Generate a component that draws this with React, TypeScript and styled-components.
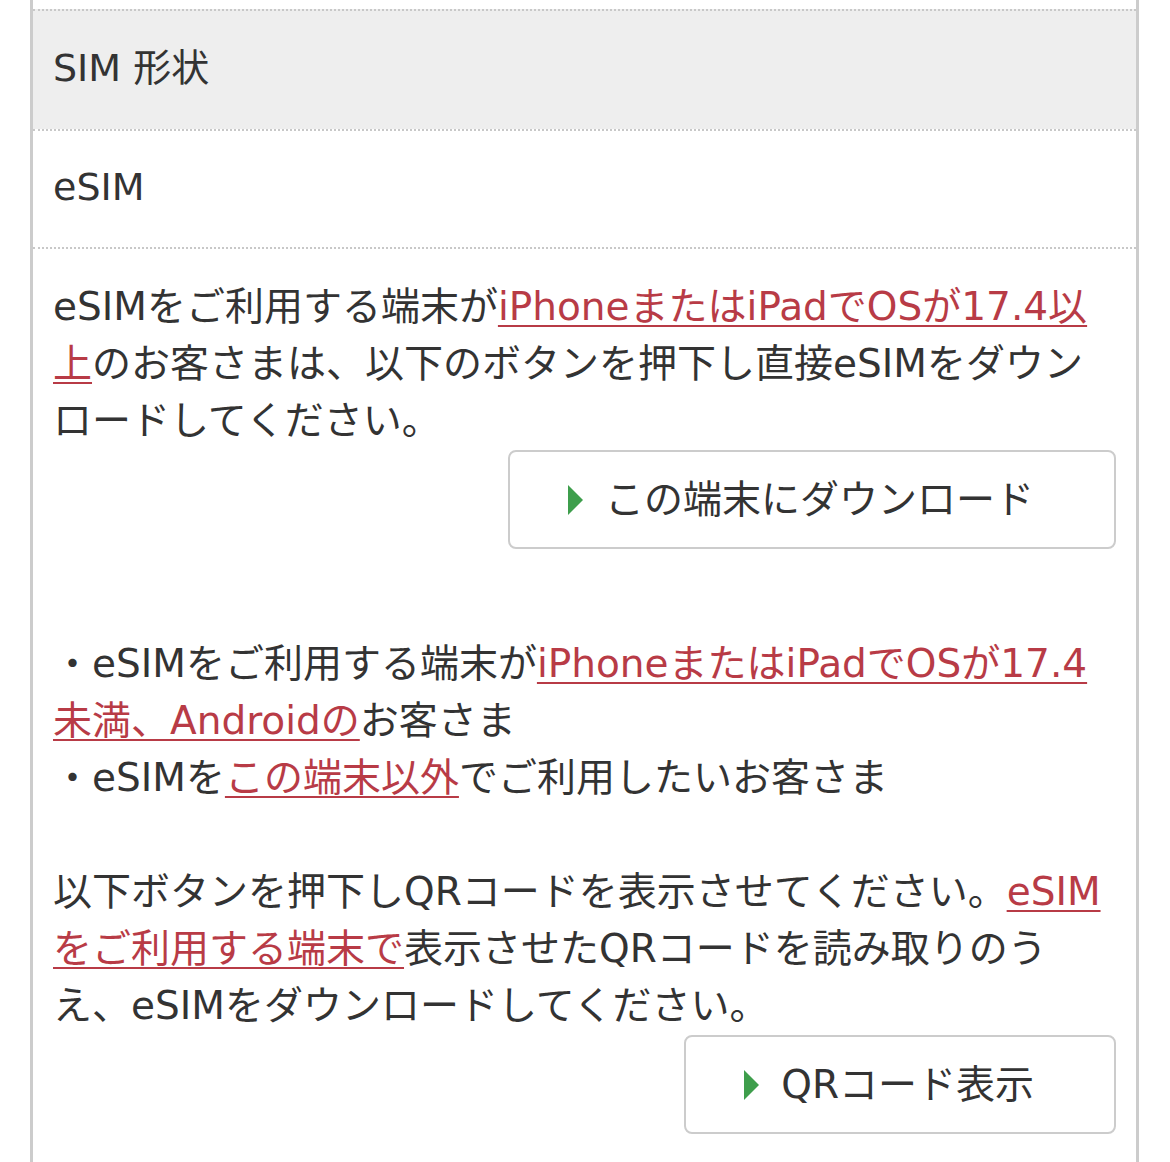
import styled, { createGlobalStyle } from "styled-components";

const GlobalStyle = createGlobalStyle`
  body {
    margin: 0;
    background: #fff;
    font-family: "DejaVu Sans", "Noto Sans CJK JP", sans-serif;
    color: #333;
  }
`;

const Frame = styled.div`
  box-sizing: border-box;
  margin-left: 30px;
  width: 1109px;
  min-height: 1162px;
  padding-top: 9px;
  border-left: 3px solid #cccccc;
  border-right: 3px solid #cccccc;
`;

const Row = styled.div<{ $head?: boolean }>`
  display: flex;
  align-items: center;
  box-sizing: border-box;
  height: ${(p) => (p.$head ? "120px" : "118px")};
  padding: 0 20px ${(p) => (p.$head ? "12px" : "4px")};
  border-top: 2px dotted #c8c8c8;
  background: ${(p) => (p.$head ? "#eeeeee" : "#fff")};
  font-size: 38px;
`;

const Body = styled.div`
  display: flex;
  flex-direction: column;
  padding: 29px 20px 0;
  border-top: 2px dotted #c8c8c8;
  font-size: 39px;
  line-height: 57px;
`;

const Para = styled.p`
  margin: 0;
`;

const Link = styled.a`
  color: #b83b46;
  text-decoration: underline;
  text-decoration-thickness: 2px;
  text-underline-offset: 5px;
`;

const Button = styled.button<{ $gap?: number }>`
  align-self: flex-end;
  display: flex;
  align-items: center;
  gap: 22px;
  margin-top: 1px;
  margin-bottom: ${(p) => p.$gap ?? 0}px;
  padding: 19px 80px 19px 58px;
  background: #fff;
  border: 2px solid #cccccc;
  border-radius: 8px;
  font-family: inherit;
  font-size: 39px;
  line-height: 57px;
  color: #333;
`;

const Arrow = styled.span`
  width: 0;
  height: 0;
  border-top: 15px solid transparent;
  border-bottom: 15px solid transparent;
  border-left: 15px solid #3e9e4c;
`;

const Blank = styled.div`
  height: 57px;
`;

export default function App() {
  return (
    <>
      <GlobalStyle />
      <Frame>
        <Row $head>SIM 形状</Row>
        <Row>eSIM</Row>
        <Body>
          <Para>
            eSIMをご利用する端末が<Link>iPhoneまたはiPadでOSが17.4以上</Link>
            のお客さまは、以下のボタンを押下し直接eSIMをダウンロードしてください。
          </Para>
          <Button $gap={86}>
            <Arrow />
            この端末にダウンロード
          </Button>
          <Para>
            ・eSIMをご利用する端末が<Link>iPhoneまたはiPadでOSが17.4未満、Androidの</Link>
            お客さま
          </Para>
          <Para>
            ・eSIMを<Link>この端末以外</Link>でご利用したいお客さま
          </Para>
          <Blank />
          <Para>
            以下ボタンを押下しQRコードを表示させてください。<Link>eSIMをご利用する端末で</Link>
            表示させたQRコードを読み取りのうえ、eSIMをダウンロードしてください。
          </Para>
          <Button>
            <Arrow />
            QRコード表示
          </Button>
        </Body>
      </Frame>
    </>
  );
}
